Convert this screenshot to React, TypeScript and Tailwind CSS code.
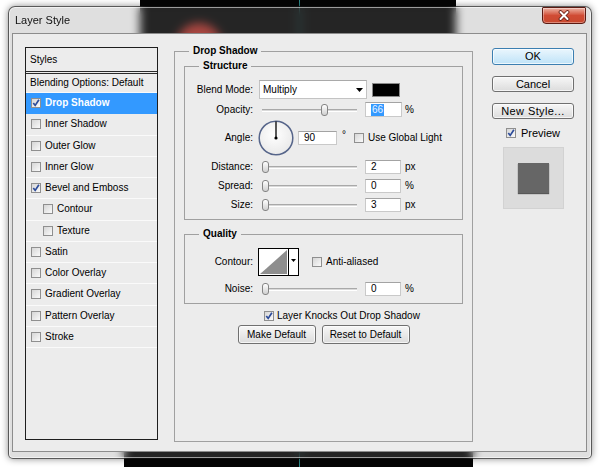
import React from "react";

const font = "font-['Liberation_Sans',Arial,Helvetica,sans-serif]";

function Check({ on = false }: { on?: boolean }) {
  return (
    <span className="relative flex h-[10px] w-[10px] shrink-0 items-center justify-center border border-[#8f8f8f] bg-linear-to-br from-[#d6d6d6] to-[#fafafa]">
      {on && (
        <svg width="8" height="8" viewBox="0 0 8 8" className="absolute left-0 top-0">
          <path d="M1.3 3.9 L3.2 6.4 L6.9 0.8" fill="none" stroke="#2c4b9a" strokeWidth="1.7" />
        </svg>
      )}
    </span>
  );
}

function Slider({ t }: { t: number }) {
  return (
    <div className="relative h-[14px] w-[95px] shrink-0">
      <div className="absolute left-0 right-0 top-[6px] h-[3px] border-t border-[#a9a9a9] border-b border-b-white bg-[#d9d9d9]" />
      <div
        className="absolute top-[1px] h-[12px] w-[7px] rounded-[3px] border border-[#858585] bg-linear-to-b from-white to-[#d0d0d0]"
        style={{ left: `${t * 89}px` }}
      />
    </div>
  );
}

function Field({ children, w = "w-[36px]" }: { children: React.ReactNode; w?: string }) {
  return (
    <div className={`flex h-[14px] ${w} shrink-0 items-center border border-[#c9c9c9] border-t-[#a3a3a3] bg-white pl-[5px]`}>
      {children}
    </div>
  );
}

function Label({ children }: { children: React.ReactNode }) {
  return <span className="w-[68px] shrink-0 text-right">{children}</span>;
}

function SliderRow({ label, t, value, unit, mt }: { label: string; t: number; value: React.ReactNode; unit: string; mt: string }) {
  return (
    <div className={`flex h-[14px] items-center ${mt}`}>
      <Label>{label}</Label>
      <div className="ml-[9px]">
        <Slider t={t} />
      </div>
      <div className="ml-[8px]">
        <Field>{value}</Field>
      </div>
      <span className="ml-[4px]">{unit}</span>
    </div>
  );
}

function Button({ children, w, h = "h-[19px]" }: { children: React.ReactNode; w: string; h?: string }) {
  return (
    <div className={`flex ${h} ${w} items-center justify-center rounded-[3px] border border-[#707070] bg-linear-to-b from-[#f7f7f7] to-[#dcdcdc] shadow-[inset_0_0_0_1px_rgba(255,255,255,0.7)]`}>
      {children}
    </div>
  );
}

const items: { label: string; on?: boolean; sel?: boolean; sub?: boolean }[] = [
  { label: "Drop Shadow", on: true, sel: true },
  { label: "Inner Shadow" },
  { label: "Outer Glow" },
  { label: "Inner Glow" },
  { label: "Bevel and Emboss", on: true },
  { label: "Contour", sub: true },
  { label: "Texture", sub: true },
  { label: "Satin" },
  { label: "Color Overlay" },
  { label: "Gradient Overlay" },
  { label: "Pattern Overlay" },
  { label: "Stroke" },
];

export default function App() {
  return (
    <div className={`relative h-[467px] w-[600px] overflow-hidden bg-white text-[10px] leading-[12px] text-black ${font}`}>
      {/* picture behind the dialog */}
      <div className="absolute left-[140px] top-0 h-[70px] w-[316px] bg-[#050505]" />
      <div className="absolute left-[124px] top-[430px] h-[37px] w-[349px] bg-[#050505]" />
      <div className="absolute left-[299px] top-0 h-[467px] w-[1px] bg-[#2e8a8a]" />
      <div className="absolute left-[176px] top-[23px] h-[46px] w-[46px] rounded-full bg-[#b8322a]" />

      {/* window */}
      <div className="absolute left-[8px] top-[6px] flex h-[453px] w-[584px] flex-col rounded-t-[7px] rounded-b-[5px] border border-[rgba(0,0,0,0.6)] bg-[rgba(133,133,133,0.26)] shadow-[inset_0_0_0_1px_rgba(255,255,255,0.55),0_0_7px_rgba(0,0,0,0.45)] backdrop-blur-[5px]">
        {/* title bar */}
        <div className="flex h-[26px] shrink-0 items-start justify-between">
          <span className="pl-[6px] pt-[6px] text-[11px] leading-[14px] text-[#111]">Layer Style</span>
          <div className="mr-[5px] flex h-[17px] w-[44px] items-center justify-center rounded-b-[4px] rounded-t-[1px] border border-[#5b1a12] bg-linear-to-b from-[#ebb2a5] via-[#d04b34] to-[#c9492f] shadow-[inset_0_0_0_1px_rgba(255,255,255,0.35)]">
            <svg width="12" height="11" viewBox="0 0 12 11">
              <path d="M2.5 2 L9.5 9 M9.5 2 L2.5 9" stroke="#6a2117" strokeWidth="3.8" strokeLinecap="round" />
              <path d="M2.5 2 L9.5 9 M9.5 2 L2.5 9" stroke="#ffffff" strokeWidth="2" strokeLinecap="round" />
            </svg>
          </div>
        </div>

        {/* client area */}
        <div className="ml-[3px] flex h-[419px] w-[575px] shrink-0 items-start border border-[#8c8c8c] bg-[#ececec] pl-[12px] pt-[11px]">
          {/* styles list */}
          <div className="mt-[2px] flex h-[393px] w-[133px] shrink-0 flex-col border border-[#1e1e1e]">
            <div className="flex h-[26px] shrink-0 items-center border-b-[3px] border-double border-[#2a2a2a] pl-[4px]">Styles</div>
            <div className="flex h-[19px] shrink-0 items-center border-b border-[#fafafa] pl-[4px]">Blending Options: Default</div>
            {items.map((it) => (
              <div
                key={it.label}
                className={`flex h-[21.25px] shrink-0 items-center gap-[4px] border-b ${
                  it.sel ? "border-[#3399ff] bg-[#3399ff] font-bold text-white" : "border-[#fafafa]"
                } ${it.sub ? "pl-[17px]" : "pl-[5px]"}`}
              >
                <Check on={it.on} />
                <span>{it.label}</span>
              </div>
            ))}
          </div>

          {/* Drop Shadow panel */}
          <fieldset className="ml-[16px] h-[397px] w-[299px] min-w-0 shrink-0 border border-[#a0a0a0] p-0">
            <legend className="ml-[14px] px-[4px] font-bold leading-[12px]">Drop Shadow</legend>
            <div className="flex flex-col px-[9px] pt-[3px]">
              {/* Structure */}
              <fieldset className="min-w-0 border border-[#a0a0a0] p-0">
                <legend className="ml-[14px] px-[4px] font-bold leading-[12px]">Structure</legend>
                <div className="flex flex-col pb-[7px]">
                  <div className="mt-[8px] flex h-[19px] items-center">
                    <Label>Blend Mode:</Label>
                    <div className="ml-[6px] flex h-[19px] w-[108px] items-center justify-between border border-[#c3c3c3] border-t-[#a9a9a9] bg-white pl-[3px] pr-[3px]">
                      <span>Multiply</span>
                      <svg width="7" height="4" viewBox="0 0 7 4">
                        <path d="M0 0 H7 L3.5 4 Z" fill="#000" />
                      </svg>
                    </div>
                    <div className="ml-[5px] h-[14px] w-[28px] border border-[#8a8a8a] bg-black" />
                  </div>
                  <div className="mt-[3px] flex h-[15px] items-center">
                    <Label>Opacity:</Label>
                    <div className="ml-[9px]">
                      <Slider t={0.66} />
                    </div>
                    <div className="ml-[8px] flex h-[15px] w-[37px] items-center border border-[#c9c9c9] border-t-[#a3a3a3] bg-white pl-[5px]">
                      <span className="bg-[#3399ff] px-[1px] text-[#e8f2ff]">66</span>
                    </div>
                    <span className="ml-[3px]">%</span>
                  </div>
                  <div className="mt-[3px] flex h-[36px] items-center">
                    <Label>Angle:</Label>
                    <svg width="36" height="36" viewBox="0 0 36 36" className="ml-[5px] shrink-0">
                      <defs>
                        <radialGradient id="dial" cx="0.45" cy="0.4" r="0.7">
                          <stop offset="0" stopColor="#ffffff" />
                          <stop offset="1" stopColor="#e6e6e6" />
                        </radialGradient>
                      </defs>
                      <circle cx="18" cy="18" r="16.8" fill="url(#dial)" stroke="#56658a" strokeWidth="1.5" />
                      <path d="M18 18 V1.5" stroke="#000" strokeWidth="1.3" />
                      <circle cx="18" cy="18" r="1.6" fill="#000" />
                    </svg>
                    <div className="ml-[4px]">
                      <Field w="w-[39px]">90</Field>
                    </div>
                    <span className="ml-[5px] self-start pt-[9px]">°</span>
                    <div className="ml-[8px] flex items-center gap-[4px]">
                      <Check />
                      <span>Use Global Light</span>
                    </div>
                  </div>
                  <SliderRow label="Distance:" t={0} value="2" unit="px" mt="mt-[4px]" />
                  <SliderRow label="Spread:" t={0} value="0" unit="%" mt="mt-[5px]" />
                  <SliderRow label="Size:" t={0} value="3" unit="px" mt="mt-[5px]" />
                </div>
              </fieldset>

              {/* Quality */}
              <fieldset className="mt-[8px] min-w-0 border border-[#a0a0a0] p-0">
                <legend className="ml-[14px] px-[4px] font-bold leading-[12px]">Quality</legend>
                <div className="flex flex-col pb-[7px]">
                  <div className="mt-[8px] flex h-[28px] items-center">
                    <Label>Contour:</Label>
                    <svg width="41" height="28" viewBox="0 0 41 28" className="ml-[5px] shrink-0">
                      <rect x="0.5" y="0.5" width="40" height="27" fill="#fff" stroke="#000" />
                      <path d="M2 26 L29 2 V26 Z" fill="#8e8e8e" />
                      <path d="M30.5 1 V27" stroke="#000" />
                      <path d="M33 11 H38 L35.5 14 Z" fill="#000" />
                    </svg>
                    <div className="ml-[13px] flex items-center gap-[4px]">
                      <Check />
                      <span>Anti-aliased</span>
                    </div>
                  </div>
                  <SliderRow label="Noise:" t={0} value="0" unit="%" mt="mt-[6px]" />
                </div>
              </fieldset>

              <div className="ml-[80px] mt-[6px] flex h-[12px] items-center gap-[3px]">
                <Check on />
                <span>Layer Knocks Out Drop Shadow</span>
              </div>
              <div className="mt-[3px] flex justify-center gap-[6px]">
                <Button w="w-[78px]">Make Default</Button>
                <Button w="w-[88px]">Reset to Default</Button>
              </div>
            </div>
          </fieldset>

          {/* right column */}
          <div className="ml-[19px] mt-[3px] flex w-[82px] shrink-0 flex-col items-center text-[11px] leading-[13px]">
            <div className="flex h-[17px] w-[82px] items-center justify-center rounded-[3px] border border-[#3c7fb1] bg-linear-to-b from-[#eaf6fd] to-[#bfe3f8] shadow-[inset_0_0_0_1px_rgba(255,255,255,0.7)]">
              OK
            </div>
            <div className="mt-[11px]">
              <Button w="w-[82px]" h="h-[16px]">Cancel</Button>
            </div>
            <div className="mt-[11px]">
              <Button w="w-[82px]" h="h-[16px]">
                <span className="tracking-[0.4px]">New Style...</span>
              </Button>
            </div>
            <div className="mt-[9px] flex h-[10px] items-center gap-[5px]">
              <Check on />
              <span>Preview</span>
            </div>
            <div className="mt-[9px] flex h-[62px] w-[61px] items-center justify-center border border-[#d2d2d2] bg-[#dcdcdc]">
              <div className="h-[30px] w-[31px] bg-[#666666] shadow-[0_1px_1px_rgba(0,0,0,0.6)]" />
            </div>
          </div>
        </div>
      </div>
    </div>
  );
}
